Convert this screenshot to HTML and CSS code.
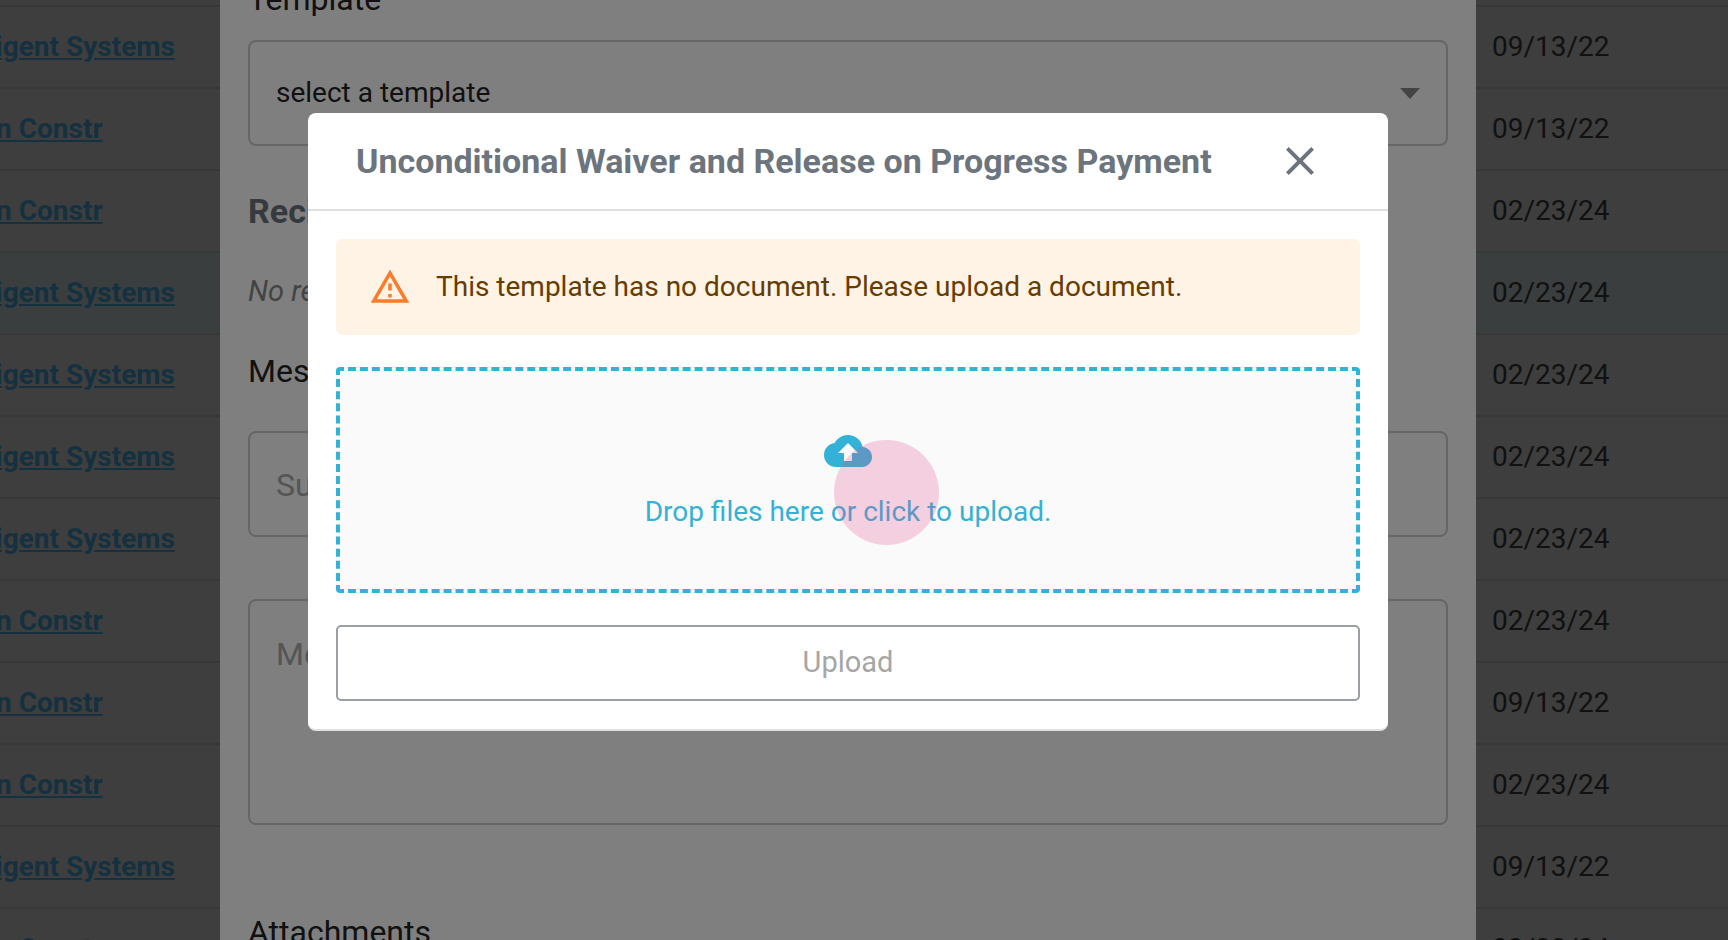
FILE: index.html
```html
<!doctype html>
<html lang="en">
<head>
  <meta charset="utf-8">
  <title>Send Document</title>
  <link rel="stylesheet" href="styles.css">
</head>
<body>
<div class="page">
  <div class="col-names">
    <div class="row"><a href="#">Intelligent Systems</a></div>
    <div class="row"><a href="#">Brown Constr</a></div>
    <div class="row"><a href="#">Brown Constr</a></div>
    <div class="row tint"><a href="#">Intelligent Systems</a></div>
    <div class="row"><a href="#">Intelligent Systems</a></div>
    <div class="row"><a href="#">Intelligent Systems</a></div>
    <div class="row"><a href="#">Intelligent Systems</a></div>
    <div class="row"><a href="#">Brown Constr</a></div>
    <div class="row"><a href="#">Brown Constr</a></div>
    <div class="row"><a href="#">Brown Constr</a></div>
    <div class="row"><a href="#">Intelligent Systems</a></div>
    <div class="row"><a href="#">Brown Constr</a></div>
  </div>

  <div class="panel">
    <div class="label">Template</div>
    <div class="select">
      <span>select a template</span>
      <i class="caret"></i>
    </div>
    <h4 class="subhead">Recipients</h4>
    <div class="none">No recipients selected</div>
    <div class="label label-msg">Message</div>
    <div class="input">Subject</div>
    <div class="input textarea">Message</div>
    <div class="label label-att">Attachments</div>
  </div>

  <div class="col-dates">
    <div class="row">09/13/22</div>
    <div class="row">09/13/22</div>
    <div class="row">02/23/24</div>
    <div class="row tint">02/23/24</div>
    <div class="row">02/23/24</div>
    <div class="row">02/23/24</div>
    <div class="row">02/23/24</div>
    <div class="row">02/23/24</div>
    <div class="row">09/13/22</div>
    <div class="row">02/23/24</div>
    <div class="row">09/13/22</div>
    <div class="row">02/23/24</div>
  </div>
</div>

<div class="scrim"></div>

<div class="modal">
  <div class="modal-head">
    <h2>Unconditional Waiver and Release on Progress Payment</h2>
    <svg class="close" viewBox="0 0 24 24"><path d="M19 6.41L17.59 5 12 10.59 6.41 5 5 6.41 10.59 12 5 17.59 6.41 19 12 13.41 17.59 19 19 17.59 13.41 12z"/></svg>
  </div>
  <div class="modal-body">
    <div class="alert">
      <svg class="warn" viewBox="0 0 24 24"><path d="M12 5.99L19.53 19H4.47L12 5.99M12 2L1 21h22L12 2zm1 14h-2v2h2v-2zm0-6h-2v4h2v-4z"/></svg>
      <span class="alert-text">This template has no document. Please upload a document.</span>
    </div>
    <div class="dropzone">
      <svg class="cloud" viewBox="0 0 24 24"><path d="M19.35 10.04C18.67 6.59 15.64 4 12 4 9.11 4 6.6 5.64 5.35 8.04 2.34 8.36 0 10.91 0 14c0 3.31 2.69 6 6 6h13c2.76 0 5-2.24 5-5 0-2.64-2.05-4.78-4.65-4.96zM14 13v4h-4v-4H7l5-5 5 5h-3z"/></svg>
      <div>Drop files here or click to upload.</div>
    </div>
    <button class="upload" disabled>Upload</button>
  </div>
</div>

<div class="cursor"></div>
</body>
</html>
```

FILE: styles.css
```css
html, body {
  margin: 0;
  height: 100%;
  overflow: hidden;
  font-family: Roboto, "Liberation Sans", sans-serif;
  font-size: 28px;
  color: #222;
}

.page {
  display: grid;
  grid-template-columns: 220px 1256px 252px;
  height: 940px;
  overflow: hidden;
  background: #7d7d7d;
}

/* table columns either side of the panel */
.col-names, .col-dates {
  padding-top: 5px;
  overflow: hidden;
}
.row {
  height: 80px;
  line-height: 80px;
  border-top: 2px solid #717171;
  white-space: nowrap;
}
.row.tint {
  background: #757d7d;
}
.col-names a {
  margin-left: -68px;
  color: #2a6280;
  font-weight: 700;
  text-decoration: underline;
}
.col-dates .row {
  padding-left: 16px;
}

/* panel behind the modal */
.panel {
  background: #fff;
  padding: 0 28px;
  margin-top: -22px;
}
.label {
  line-height: 42px;
  font-size: 32px;
}
.select {
  display: flex;
  align-items: center;
  justify-content: space-between;
  box-sizing: border-box;
  height: 106px;
  margin-top: 20px;
  padding: 0 26px;
  border: 2px solid #ccc;
  border-radius: 8px;
}
.select span {
  padding-bottom: 2px;
}
.caret {
  width: 0;
  height: 0;
  border-left: 10px solid transparent;
  border-right: 10px solid transparent;
  border-top: 11px solid #888;
}
.subhead {
  margin: 44px 0 0;
  font-size: 34px;
  line-height: 42px;
  font-weight: 700;
  color: #6c757d;
}
.none {
  margin-top: 38px;
  line-height: 42px;
  font-size: 29px;
  font-style: italic;
  color: #888;
}
.label-msg {
  margin-top: 38px;
}
.input {
  box-sizing: border-box;
  height: 106px;
  margin-top: 39px;
  padding: 0 26px;
  line-height: 104px;
  font-size: 32px;
  border: 2px solid #ccc;
  border-radius: 8px;
  color: #aaa;
}
.textarea {
  height: 226px;
  margin-top: 62px;
  line-height: 106px;
}
.label-att {
  margin-top: 86px;
}

.scrim {
  position: fixed;
  inset: 0;
  background: rgba(0, 0, 0, .5);
}

/* modal */
.modal {
  position: absolute;
  left: 308px;
  top: 113px;
  width: 1080px;
  background: #fff;
  border-radius: 8px;
  border-bottom: 2px solid #e0e0e0;
}
.modal-head {
  display: flex;
  align-items: center;
  justify-content: space-between;
  height: 96px;
  padding: 0 64px 0 48px;
  border-bottom: 2px solid #e0e0e0;
}
.modal-head h2 {
  margin: 0;
  font-size: 34px;
  font-weight: 700;
  color: #6c757d;
}
.close {
  width: 48px;
  height: 48px;
  fill: #6c757d;
}
.modal-body {
  padding: 28px;
}
.alert {
  display: flex;
  align-items: center;
  gap: 25px;
  height: 96px;
  padding-left: 33px;
  background: #fff3e6;
  border-radius: 6px;
  color: #663c00;
}
.alert-text {
  padding-bottom: 2px;
}
.warn {
  width: 42px;
  height: 42px;
  fill: #f97b2b;
}
.dropzone {
  display: flex;
  flex-direction: column;
  align-items: center;
  box-sizing: border-box;
  height: 226px;
  margin-top: 32px;
  padding-top: 56px;
  background: #fafafa;
  border: 4px dashed #33b1d6;
  border-radius: 4px;
  color: #33b1d6;
}
.cloud {
  width: 48px;
  height: 48px;
  margin-bottom: 20px;
  fill: #33b1d6;
}
.upload {
  display: block;
  width: 100%;
  height: 76px;
  margin-top: 32px;
  padding-bottom: 3px;
  background: #fff;
  border: 2px solid #9aa0a6;
  border-radius: 5px;
  font: inherit;
  font-size: 29px;
  color: #a6a6a6;
}

/* screen recorder's click highlight */
.cursor {
  position: absolute;
  left: 834px;
  top: 440px;
  width: 105px;
  height: 105px;
  border-radius: 50%;
  background: rgba(222, 78, 146, .25);
}
```
